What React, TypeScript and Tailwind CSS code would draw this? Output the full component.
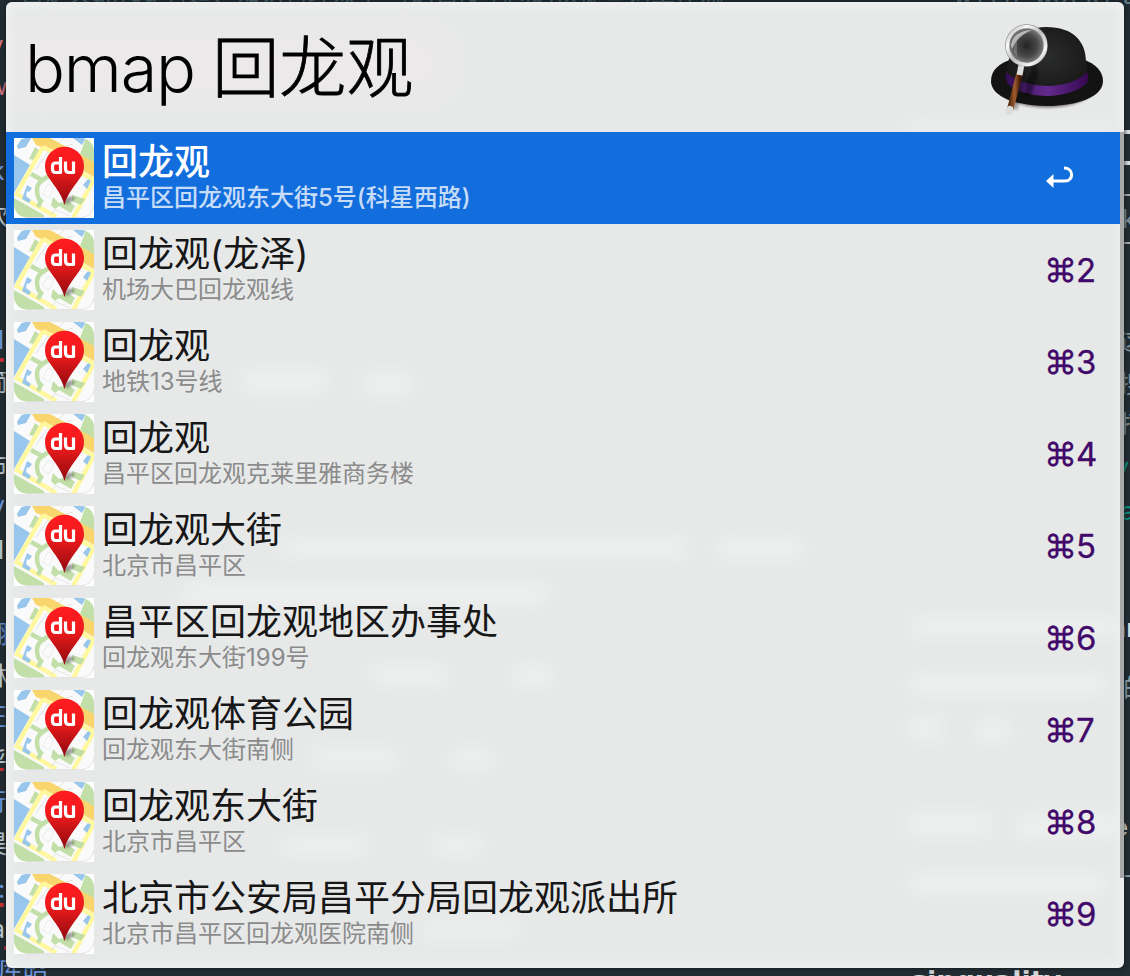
const rows: [string, string][] = [
  ["回龙观", "昌平区回龙观东大街5号(科星西路)"],
  ["回龙观(龙泽)", "机场大巴回龙观线"],
  ["回龙观", "地铁13号线"],
  ["回龙观", "昌平区回龙观克莱里雅商务楼"],
  ["回龙观大街", "北京市昌平区"],
  ["昌平区回龙观地区办事处", "回龙观东大街199号"],
  ["回龙观体育公园", "回龙观东大街南侧"],
  ["回龙观东大街", "北京市昌平区"],
  ["北京市公安局昌平分局回龙观派出所", "北京市昌平区回龙观医院南侧"],
];

function MapIcon({ id }: { id: string }) {
  return (
    <svg viewBox="0 0 80 80" className="size-20 shrink-0">
      <defs>
        <linearGradient id={`pin${id}`} x1="0" y1="0" x2="0" y2="1">
          <stop offset="0" stopColor="#ff1c20" />
          <stop offset="0.4" stopColor="#f01a1d" />
          <stop offset="1" stopColor="#8c0b0e" />
        </linearGradient>
        <clipPath id={`clip${id}`}>
          <rect width="80" height="79.5" rx="13" />
        </clipPath>
        <filter id={`soft${id}`} x="-30%" y="-60%" width="160%" height="220%">
          <feGaussianBlur stdDeviation="1.5" />
        </filter>
      </defs>
      <rect width="80" height="80" fill="#fff" />
      <g clipPath={`url(#clip${id})`}>
        <rect width="80" height="80" fill="#fafafa" />
        <path d="M3 8 8 0H17L12 9 4 11Z" fill="#98c6ec" />
        <path d="M0 17 16 27 0 55Z" fill="#98c6ec" />
        <path d="M59 0H72L68 7Z" fill="#98c6ec" />
        <path d="M21 9 25 12 20 22 15 21Z" fill="#c3dfa9" />
        <path d="M72 0H80V30L66 16Z" fill="#c3dfa9" />
        <path d="M0 60 30 77V80H0Z" fill="#c3dfa9" />
        <path d="M18 0H36L80 24V39L36 13 22 7Z" fill="#f9d56e" />
        <path d="M29 9 3 55M29 9 42 16M1 55 42 79M58 82 79 43M66 34 80 42" fill="none" stroke="#fff89f" strokeWidth="4.500" />
        <path d="M13 47 18 50 15 54 13 53 12 58 17 62 15 65 8 61Z" fill="#98c6ec" />
        <path d="M69 47 74 41 77 43 73 51Z" fill="#98c6ec" />
        <path d="M17 36 28 42 35 38M31 41Q23 44 23 52 23 60 27 63L24 69" fill="none" stroke="#c3dfa9" strokeWidth="4.500" />
        <path d="M58 57 71 61 67 67 58 63Z" fill="#c3dfa9" />
        <path d="M39 59 45 65 54 63 61 68 57 75 45 68 41 71 37 67Z" fill="#c3dfa9" />
        <path d="M27 24 33 15 40 19M22 32 27 23 34 27M36 76 42 72 56 78M45 5 50 0M53 8 59 6" fill="none" stroke="#e3e3e3" strokeWidth="1" />
        <path d="M28 56 34 46 40 49 35 60Z" fill="none" stroke="#e8e8e8" strokeWidth="0.8" />
      </g>
      <path d="M80 68Q78 79 67 79.5H12" fill="none" stroke="#d8d8d8" strokeWidth="0.7" />
      <path d="M50 66 52 60Q58 57 61 60 58 65 50 66Z" fill="#333" opacity="0.5" filter={`url(#soft${id})`} />
      <path d="M50.500 67C47.500 56 41 49 35 40A19.500 19.500 0 1 1 66 40C60 49 53 56 50.500 67Z" fill={`url(#pin${id})`} />
      <g fill="none" stroke="#fff" strokeWidth="3.200" strokeLinejoin="round">
        <path d="M46.500 19V34.500H41.500Q38.500 34.500 38.500 31V28.500Q38.500 25 41.500 25H46.500" />
        <path d="M51.500 23.500V30.500Q51.500 34.500 55 34.500H59.500V23.500" />
      </g>
    </svg>
  );
}

function HatIcon() {
  return (
    <svg viewBox="0 0 120 100" className="h-[100px] w-[120px] shrink-0">
      <defs>
        <radialGradient id="crown" cx="0.5" cy="0.45" r="0.6">
          <stop offset="0" stopColor="#2b2d2c" />
          <stop offset="1" stopColor="#161616" />
        </radialGradient>
        <linearGradient id="band">
          <stop offset="0" stopColor="#350e54" />
          <stop offset="0.5" stopColor="#632b8d" />
          <stop offset="1" stopColor="#350750" />
        </linearGradient>
        <radialGradient id="lens">
          <stop offset="0" stopColor="#242424" />
          <stop offset="0.6" stopColor="#484848" />
          <stop offset="1" stopColor="#858585" />
        </radialGradient>
        <linearGradient id="ring" x1="0" y1="0" x2="1" y2="1">
          <stop offset="0" stopColor="#aaa" />
          <stop offset="0.25" stopColor="#fafafa" />
          <stop offset="0.5" stopColor="#bbb" />
          <stop offset="0.8" stopColor="#f5f5f5" />
          <stop offset="1" stopColor="#999" />
        </linearGradient>
        <linearGradient id="wood">
          <stop offset="0" stopColor="#5c2e12" />
          <stop offset="0.5" stopColor="#a05d31" />
          <stop offset="1" stopColor="#482008" />
        </linearGradient>
        <filter id="blur" x="-20%" y="-30%" width="140%" height="160%">
          <feGaussianBlur stdDeviation="1.3" />
        </filter>
      </defs>
      <ellipse cx="61" cy="67" rx="50" ry="23" fill="#5b4b4b" opacity="0.6" filter="url(#blur)" />
      <path d="M5 63C5 51 15 45 24 42H99C109 46 117 53 117 63 117 79 91 88 61 88S5 79 5 63Z" fill="#131313" />
      <path d="M22 65Q18 49 25 37C29 20 42 9 60 9 88 9 100 24 100 44L102 64C82 79 42 79 22 65Z" fill="url(#crown)" />
      <path d="M20 54C38 72 84 73 101 54Q103 60 101 65C84 82 40 82 22 66 19 62 20 57 20 54Z" fill="url(#band)" />
      <path d="M50 43 42 59 38 79 45 77 52 57Z" fill="#000" opacity="0.4" filter="url(#blur)" />
      <path d="M28 91 38 54" stroke="#111" strokeWidth="7" opacity="0.3" filter="url(#blur)" />
      <path d="M24 92 33.500 56" stroke="url(#wood)" strokeWidth="6.500" />
      <path d="M23 94 24 91" stroke="#dcdcdc" strokeWidth="6.500" strokeLinecap="round" />
      <path d="M33.500 57 36 44" stroke="#ddd" strokeWidth="6" />
      <circle cx="40.500" cy="27.500" r="18.500" fill="url(#lens)" />
      <path d="M25 27Q27 13 46 12Q31 18 26 31Z" fill="#dedede" opacity="0.7" />
      <path d="M28 23H31V38L28 34Z" fill="#bbb" opacity="0.3" />
      <circle cx="40.500" cy="27.500" r="19" fill="none" stroke="#777" strokeWidth="4.600" />
      <circle cx="40.500" cy="27.500" r="19" fill="none" stroke="url(#ring)" strokeWidth="3.700" />
    </svg>
  );
}

const glows = [
  "left-[240px] top-[368px] w-[90px] h-[26px]",
  "left-[360px] top-[372px] w-[55px] h-[24px]",
  "left-[280px] top-[538px] w-[410px] h-[20px]",
  "left-[715px] top-[538px] w-[90px] h-[22px]",
  "left-[180px] top-[582px] w-[370px] h-[24px]",
  "left-[370px] top-[664px] w-[80px] h-[22px]",
  "left-[510px] top-[664px] w-[45px] h-[22px]",
  "left-[310px] top-[748px] w-[90px] h-[22px]",
  "left-[450px] top-[748px] w-[45px] h-[22px]",
  "left-[280px] top-[836px] w-[90px] h-[20px]",
  "left-[430px] top-[836px] w-[55px] h-[20px]",
  "left-[420px] top-[922px] w-[100px] h-[18px]",
  "left-[908px] top-[616px] w-[216px] h-[20px]",
  "left-[908px] top-[674px] w-[200px] h-[22px]",
  "left-[908px] top-[714px] w-[36px] h-[28px]",
  "left-[974px] top-[718px] w-[38px] h-[26px]",
  "left-[904px] top-[812px] w-[90px] h-[24px]",
  "left-[1014px] top-[814px] w-[110px] h-[24px]",
  "left-[908px] top-[872px] w-[200px] h-[22px]",
  "left-[904px] top-[122px] w-[210px] h-[12px]",
];

const fragments: [string, string][] = [
  ["k", "left-[-9px] top-[157px] text-[#6d96dc]"],
  ["次", "left-[-16px] top-[202px] text-[#bfc8cd]"],
  ["l", "left-[-2px] top-[326px] text-[#6d96dc]"],
  ["简", "left-[-17px] top-[368px] text-[#bfc8cd]"],
  ["市", "left-[-17px] top-[452px] text-[#bfc8cd]"],
  ["y", "left-[-9px] top-[491px] text-[#6d96dc]"],
  ["l", "left-[-2px] top-[536px] text-[#bfc8cd]"],
  ["翻", "left-[-17px] top-[620px] text-[#6d96dc]"],
  ["林", "left-[-17px] top-[662px] text-[#bfc8cd]"],
  ["王", "left-[-17px] top-[703px] text-[#6d96dc]"],
  ["乎", "left-[-17px] top-[747px] text-[#bfc8cd]"],
  ["行", "left-[-18px] top-[788px] text-[#6d96dc]"],
  ["昊", "left-[-17px] top-[830px] text-[#bfc8cd]"],
  [":", "left-[-2px] top-[875px] text-[#6d96dc]"],
  ["a", "left-[-9px] top-[915px] text-[#bfc8cd]"],
  ["库昭", "left-[-2px] top-[956px] text-[#6d96dc]"],
  ["k", "left-[1122px] top-[205px] text-[#7c929b]"],
  ["这", "left-[1119px] top-[327px] text-[#7c929b]"],
  ["搜", "left-[1119px] top-[370px] text-[#7c929b]"],
  ["打", "left-[1119px] top-[410px] text-[#7c929b]"],
  ["y", "left-[1115px] top-[453px] text-[#0a9584]"],
  ["a", "left-[1121px] top-[497px] text-[#0a9584]"],
  ["an", "left-[1112px] top-[614px] font-medium text-[#d8dde0]"],
  ["的", "left-[1123px] top-[674px] text-[#8da2ac]"],
  ["e", "left-[1113px] top-[813px] font-bold text-[#d8dde0]"],
  ["下", "left-[1123px] top-[872px] text-[#8da2ac]"],
];

const marks = [
  "left-0 top-[358px] h-1 w-1 bg-[#c53035]",
  "left-0 top-[768px] h-[3px] w-1 bg-[#c53035]",
  "left-0 top-[903px] h-1 w-1 bg-[#c53035]",
  "left-[4px] top-[946px] h-1 w-0.5 bg-[#c53035]",
  "left-[1114px] top-[130px] h-[35px] w-5 border-y-4 border-[#d8dde0]",
  "left-[1114px] top-[194px] h-[50px] w-5 border-y-2 border-[#aaa]",
];

export default function App() {
  return (
    <div className="relative h-[976px] w-[1130px] overflow-hidden bg-[#222d33] pl-1.5 pt-0.5 font-['Inter','Noto_Sans_CJK_SC',sans-serif]">
      <div className="absolute left-5 top-[-18px] whitespace-nowrap text-[24px] leading-6 text-[#4f6a75]">
        自定义alfred 有道、知识管理效率 写的百度地图的快捷查询工作流
      </div>
      <div className="absolute left-[955px] top-[-17px] whitespace-nowrap font-['Liberation_Mono',monospace] text-[27px] leading-7 text-[#607d88]">with workflow</div>
      {fragments.map(([text, style], i) => (
        <span key={i} className={`absolute whitespace-nowrap text-[25px] leading-7 ${style}`}>{text}</span>
      ))}
      <div className="absolute left-[-10px] top-[29px] text-2xl text-[#d97383]">y</div>
      <div className="absolute left-[-12px] top-[71px] text-2xl text-[#d97383]">w</div>
      {marks.map((m) => <div key={m} className={`absolute ${m}`} />)}
      <div className="absolute left-[911px] top-[967px] whitespace-nowrap font-['DejaVu_Sans',sans-serif] text-[27px] font-bold leading-7 text-[#d5d9da]">sinquality</div>

      <div className="relative h-[966px] w-[1118px] overflow-hidden rounded-[6px] bg-[#e7e9e9] shadow-[0_0_5px_#10181c]">
        <div className="absolute -left-1.5 -top-0.5 size-full">
          {glows.map((g) => <div key={g} className={`absolute rounded-full bg-white/30 blur-[9px] ${g}`} />)}
          <div className="absolute left-1.5 top-[34px] h-[60px] w-[440px] bg-[#f1e9eb]/60 blur-[20px]" />
        </div>
        <div className="absolute inset-0 shadow-[inset_0_0_16px_rgba(255,255,255,0.6)]" />
        <header className="relative flex h-[130px] items-start justify-between pl-[19px] pr-[18px]">
          <h1 className="whitespace-nowrap pt-[16px] text-[66.500px] font-[350] leading-[100px] tracking-[-1.200px] text-black">
            bmap <span className="text-[67px] font-light tracking-[0px] [-webkit-text-stroke:0.8px_black]">回龙观</span>
          </h1>
          <div className="pt-[16px]"><HatIcon /></div>
        </header>
        <main className="relative flex">
          <ul className="w-[1114px]">
            {rows.map(([title, subtitle], i) => (
              <li key={i} className={`flex h-[92px] items-center pl-2 ${i === 0 ? "bg-[#126ddd]" : ""}`}>
                <MapIcon id={String(i)} />
                <div className="ml-2 flex-1 whitespace-nowrap">
                  <div className={`h-[40px] pt-px text-[36px] leading-[40px] ${i === 0 ? "font-medium text-white" : "text-[#171717]"}`}>{title}</div>
                  <div className={`h-[34px] text-[24px] leading-[34px] ${i === 0 ? "font-medium text-[#c6dcf8]" : "text-[#8b8b8b]"}`}>{subtitle}</div>
                </div>
                <div className="w-[76px] text-[33px] leading-10 tracking-[-1px] text-[#41096a] [-webkit-text-stroke:0.3px_#41096a]">
                  {i === 0 ? (
                    <svg viewBox="0 0 28 24" className="ml-[2px] h-6 w-7">
                      <path d="M7 15H19C28 15 28 2 18 2" fill="none" stroke="#fff" strokeWidth="3" />
                      <path d="M0 15 7.500 8V22Z" fill="#fff" />
                    </svg>
                  ) : `⌘${i + 1}`}
                </div>
              </li>
            ))}
          </ul>
          <div className="h-[746px] w-1 bg-[#a9a9a9]" />
        </main>
      </div>
    </div>
  );
}
